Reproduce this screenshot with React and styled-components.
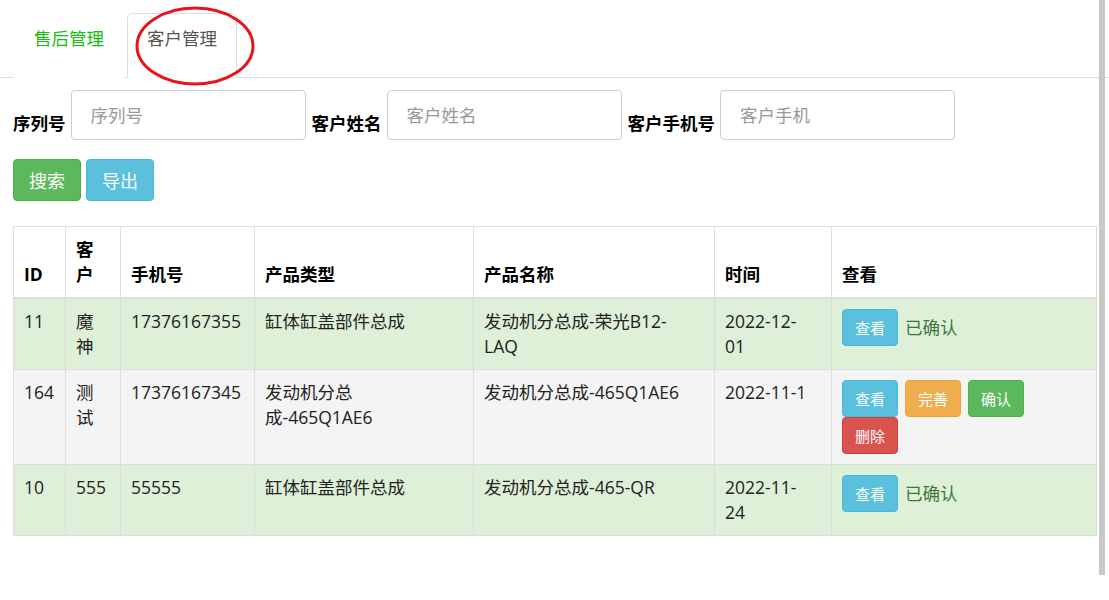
import styled, { createGlobalStyle } from 'styled-components'

const GlobalStyle = createGlobalStyle`
  html, body {
    margin: 0;
    padding: 0;
    background: #fff;
    font-family: "Open Sans", "Noto Sans CJK SC", sans-serif;
    font-size: 17.5px;
    color: #222;
    overflow: hidden;
  }
`

const Page = styled.div`
  position: relative;
  width: 1109px;
  height: 600px;
`

const Nav = styled.ul`
  display: flex;
  margin: 0;
  padding: 13px 0 0 14px;
  list-style: none;
  border-bottom: 1px solid #ddd;
`

const Tab = styled.li`
  margin-right: 3px;
  margin-bottom: -1px;
  padding: 12px 19px 26px;
  line-height: 25px;
  border: 1px solid ${p => (p.$active ? '#ddd' : 'transparent')};
  border-bottom-color: transparent;
  border-radius: 5px 5px 0 0;
  background: #fff;
  color: ${p => (p.$active ? '#555' : '#12bf12')};
`

const Mark = styled.svg`
  position: absolute;
  left: 134px;
  top: 5px;
`

const Content = styled.div`
  padding: 12px 12px 0 13px;
`

const Filters = styled.div`
  display: flex;
  align-items: flex-end;
  gap: 5px;
`

const Label = styled.label`
  font-weight: bold;
  color: #000;
  line-height: 25px;
  margin-bottom: 4px;
  margin-left: ${p => (p.$first ? '0' : '1px')};
`

const Input = styled.input`
  box-sizing: border-box;
  width: 235px;
  height: 50px;
  padding: 0 19px 1px;
  border: 1px solid #ccc;
  border-radius: 4px;
  font: inherit;
  color: #555;
  &::placeholder {
    color: #999;
  }
`

const Actions = styled.div`
  display: flex;
  gap: 5px;
  margin: 19px 0 25px;
`

const colors = {
  success: ['#5cb85c', '#4cae4c'],
  info: ['#5bc0de', '#46b8da'],
  warning: ['#f0ad4e', '#eea236'],
  danger: ['#d9534f', '#d43f3a'],
}

const Button = styled.button`
  box-sizing: border-box;
  height: ${p => (p.$small ? '37px' : '42px')};
  padding: ${p => (p.$small ? '0 12px' : '0 15px')};
  border: 1px solid ${p => colors[p.$kind][1]};
  border-radius: 4px;
  background: ${p => colors[p.$kind][0]};
  color: #fff;
  font-family: "Noto Sans CJK SC", sans-serif;
  font-size: ${p => (p.$small ? '15px' : '18px')};
  line-height: 22px;
`

const Table = styled.table`
  width: 1084px;
  border-collapse: collapse;
  table-layout: fixed;
  border: 1px solid #ddd;

  th, td {
    padding: 10px;
    border: 1px solid #ddd;
    line-height: 25px;
    text-align: left;
  }

  th {
    vertical-align: bottom;
    border-bottom: 2px solid #ddd;
    color: #000;
    font-weight: bold;
  }

  td {
    vertical-align: top;
  }

  /* the reference font runs wider than ours: narrow these cells so lines break where they do there */
  td:nth-child(4) { padding-right: 25px; }
  td:nth-child(5) { padding-right: 22px; }
  td:nth-child(6) { padding-right: 18px; }
`

const Row = styled.tr`
  background: ${p => (p.$ok ? '#dff0d8' : '#f4f4f4')};
`

const Ops = styled.div`
  display: flex;
  flex-wrap: wrap;
  align-items: center;
  column-gap: 7px;
`

const Done = styled.span`
  color: #3c763d;
`

const Scroll = styled.div`
  position: absolute;
  right: 4px;
  top: 0;
  width: 6px;
  height: 575px;
  background: #c8c8c8;
`

const rows = [
  { id: 11, name: '魔神', phone: '17376167355', type: '缸体缸盖部件总成', product: '发动机分总成-荣光B12-LAQ', time: '2022-12-01', ok: true },
  { id: 164, name: '测试', phone: '17376167345', type: '发动机分总成-465Q1AE6', product: '发动机分总成-465Q1AE6', time: '2022-11-1', ok: false },
  { id: 10, name: '555', phone: '55555', type: '缸体缸盖部件总成', product: '发动机分总成-465-QR', time: '2022-11-24', ok: true },
]

export default function App() {
  return (
    <Page>
      <GlobalStyle />
      <Nav>
        <Tab>售后管理</Tab>
        <Tab $active>客户管理</Tab>
      </Nav>
      <Mark width="122" height="82" viewBox="0 0 122 82">
        <ellipse cx="61" cy="41" rx="58" ry="38" fill="none" stroke="#e8141b" strokeWidth="3" />
      </Mark>
      <Content>
        <Filters>
          <Label $first>序列号</Label>
          <Input placeholder="序列号" />
          <Label>客户姓名</Label>
          <Input placeholder="客户姓名" />
          <Label>客户手机号</Label>
          <Input placeholder="客户手机" />
        </Filters>
        <Actions>
          <Button $kind="success">搜索</Button>
          <Button $kind="info">导出</Button>
        </Actions>
        <Table>
          <colgroup>
            <col style={{ width: 52 }} />
            <col style={{ width: 55 }} />
            <col style={{ width: 134 }} />
            <col style={{ width: 219 }} />
            <col style={{ width: 241 }} />
            <col style={{ width: 117 }} />
            <col />
          </colgroup>
          <thead>
            <tr>
              <th>ID</th>
              <th>客户</th>
              <th>手机号</th>
              <th>产品类型</th>
              <th>产品名称</th>
              <th>时间</th>
              <th>查看</th>
            </tr>
          </thead>
          <tbody>
            {rows.map(r => (
              <Row key={r.id} $ok={r.ok}>
                <td>{r.id}</td>
                <td>{r.name}</td>
                <td>{r.phone}</td>
                <td>{r.type}</td>
                <td>{r.product}</td>
                <td>{r.time}</td>
                <td>
                  <Ops>
                    <Button $small $kind="info">查看</Button>
                    {r.ok ? (
                      <Done>已确认</Done>
                    ) : (
                      <>
                        <Button $small $kind="warning">完善</Button>
                        <Button $small $kind="success">确认</Button>
                        <Button $small $kind="danger">删除</Button>
                      </>
                    )}
                  </Ops>
                </td>
              </Row>
            ))}
          </tbody>
        </Table>
      </Content>
      <Scroll />
    </Page>
  )
}
